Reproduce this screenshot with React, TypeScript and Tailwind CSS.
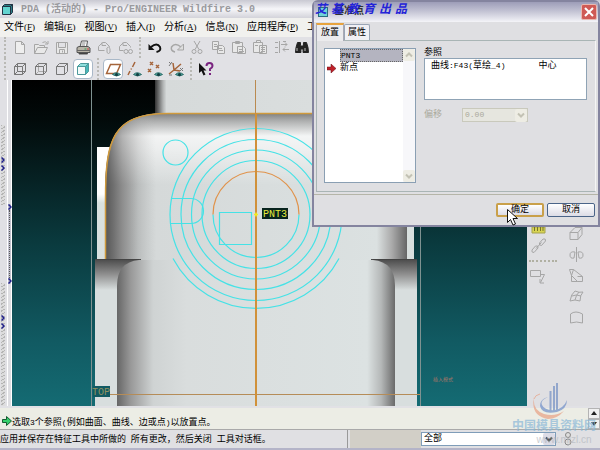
import { Fragment, type ReactNode } from "react";
import clsx from "clsx";

const cjk = "font-['Liberation_Mono','Noto_Sans_CJK_SC',monospace]";

/* Chinese at the parent's size, latin runs one step smaller in a fixed width */
function Mixed({ text, latin = "text-[8px]" }: { text: string; latin?: string }) {
  return (
    <>
      {text.split(/([\x20-\x7e]+)/).map((part, i) => (
        <Fragment key={i}>{i % 2 ? <span className={latin}>{part}</span> : part}</Fragment>
      ))}
    </>
  );
}

const menus = [
  { label: "文件", hot: "F" },
  { label: "编辑", hot: "E" },
  { label: "视图", hot: "V" },
  { label: "插入", hot: "I" },
  { label: "分析", hot: "A" },
  { label: "信息", hot: "N" },
  { label: "应用程序", hot: "P" },
  { label: "工具", hot: "T" },
];

type Tool = { name: string; icon: ReactNode; active?: boolean } | "sep";

const eye = (
  <g>
    <path d="M7.500 13.500q3.500-3.500 8 0q-4 3-8 0z" fill="#4fa39b" stroke="#2d6f6c" />
    <circle cx="11.500" cy="13.500" r="1.500" fill="#123f42" stroke="none" />
  </g>
);

const fileTools: Tool[] = [
  { name: "新建", icon: <path d="M3.500 2.500h6l3 3v9h-9zM9.500 2.500v3h3" fill="#eee" /> },
  {
    name: "打开",
    icon: <path d="M1.500 14.500v-9h4l1 1h5v2M1.500 14.500l3-6h10l-3 6zM9.500 3.500q3-2 5 1M15 2v3h-3" fill="#e8e8e8" />,
  },
  {
    name: "保存",
    icon: <path d="M2.500 3.500h11v11h-11zM4.500 3.500v5h7v-5M5.500 14.500v-4h5v4M8.500 11.500v2" fill="#e8e8e8" />,
  },
  {
    name: "打印",
    icon: (
      <g stroke="#555">
        <path d="M5 8l1.500-6h6l-1 6z" fill="#fff" />
        <path d="M7 4h3.500M6.500 6h3.500" stroke="#888" />
        <path d="M2 8.500l2-1h9l2 1.500v4.500h-13z" fill="#b8b4a8" />
        <path d="M2 11.500h13" stroke="#666" />
        <path d="M4 13.500h8.500v1.500h-8.500z" fill="#333" />
        <path d="M9.500 10h2" stroke="#3a9a50" />
        <path d="M12 10h2" stroke="#d04040" />
      </g>
    ),
  },
  {
    name: "发送",
    icon: <path d="M2.500 11.500v-4l4-4h3l4 4v1M2.500 11.500h6M6 3.500v3h4M10.500 9.500q2-3 3.500 0v4q-1.500 2-3 0v-4" />,
  },
  {
    name: "发送链接",
    icon: (
      <g>
        <path d="M2.500 11.500v-4l4-4h3l4 4v1M2.500 11.500h4M6 3.500v3h4" />
        <circle cx="9" cy="12.500" r="2" />
        <circle cx="13.500" cy="12.500" r="2" />
      </g>
    ),
  },
  "sep",
  {
    name: "撤消",
    icon: (
      <g>
        <path d="M4 8q6-5 9 0q1.500 4-3.500 5" stroke="#111" strokeWidth="2" />
        <path d="M1.500 5v6h6z" fill="#111" stroke="none" />
      </g>
    ),
  },
  {
    name: "重做",
    icon: (
      <g>
        <path d="M13 8q-6-5-9.500 0q-1 4 3.500 5" strokeWidth="1.500" />
        <path d="M15.500 5v6h-6z" fill="#ddd" />
      </g>
    ),
  },
  {
    name: "剪切",
    icon: (
      <g>
        <path d="M5 2l5 8.500M11 2l-5 8.500" />
        <circle cx="5" cy="12.500" r="2" />
        <circle cx="11" cy="12.500" r="2" />
      </g>
    ),
  },
  {
    name: "复制",
    icon: <path d="M2.500 2.500h6v8h-6zM7.500 6.500h5l2 2v6h-7zM9 9.500h3M9 11.500h4M4 5.500h3M4 7.500h3" fill="#e8e8e8" />,
  },
  {
    name: "粘贴",
    icon: <path d="M1.500 3.500h10v10h-10zM4.500 2.500h4v2h-4zM6.500 7.500h6l2 2v5h-8zM8 10.500h4M8 12.500h5" fill="#e8e8e8" />,
  },
  {
    name: "选择性粘贴",
    icon: <path d="M1.500 3.500h9v10h-9zM4.500 1.500h4v2h-4zM7.500 6.500h7v8h-7zM9 8.500h4M9 10.500h4M9 12.500h4M3 6.500h3" fill="#e8e8e8" />,
  },
  {
    name: "再生",
    icon: <path d="M2 3.500h3M2 8.500h3M2 13.500h3M6.500 2v12M8 5.500h6M12 3.500l2 2-2 2M16 10.500h-6M12 8.500l-2 2 2 2M10 2.500h3" />,
  },
  {
    name: "查找",
    icon: (
      <g fill="#222" stroke="#222">
        <path d="M3.500 3.500h3v3l.5 7h-5.500l.5-5z" />
        <path d="M9.500 3.500h3l1.500 5 .5 5h-5.500z" />
        <path d="M6.500 7h3v3h-3z" />
        <path d="M3 9v3M11 9v3" stroke="#bbb" />
      </g>
    ),
  },
];

const cube = "M2.500 5.500h8v8h-8zM2.500 5.500l3-3h8l-3 3M13.500 2.500v8l-3 3";

const viewTools: Tool[] = [
  { name: "线框", icon: <path d={cube + "M5.500 2.500v8h8M5.500 10.500l-3 3"} stroke="#777" /> },
  {
    name: "隐藏线",
    icon: (
      <g>
        <path d="M5.500 2.500v8h8M5.500 10.500l-3 3" stroke="#aaa" />
        <path d={cube} stroke="#777" />
      </g>
    ),
  },
  { name: "无隐藏线", icon: <path d={cube} stroke="#777" /> },
  {
    name: "着色",
    active: true,
    icon: (
      <g stroke="#4c9a9c">
        <path d="M2.500 5.500h8v8h-8z" fill="#f2fbfa" />
        <path d="M2.500 5.500l3-3h8l-3 3z" fill="#8edfdc" />
        <path d="M13.500 2.500v8l-3 3v-8z" fill="#48b8b8" />
      </g>
    ),
  },
  "sep",
  {
    name: "基准平面",
    active: true,
    icon: (
      <g>
        <path d="M1.500 12.500l4-9h10l-4 9z" stroke="#a5643a" strokeWidth="1.500" />
        {eye}
      </g>
    ),
  },
  {
    name: "基准轴",
    icon: (
      <g>
        <path d="M9 1l-2.500 5M5.500 7.500l-.5 1M4 10l-2 4" stroke="#a5643a" strokeWidth="1.500" />
        {eye}
      </g>
    ),
  },
  {
    name: "基准点显示",
    icon: (
      <g>
        <path
          d="M3 1l3 3M6 1l-3 3M9 4l3 3M12 4l-3 3M1 8l3 3M4 8l-3 3"
          stroke="#a5643a"
          strokeWidth="1.500"
        />
        {eye}
      </g>
    ),
  },
  {
    name: "坐标系",
    icon: (
      <g>
        <path d="M6 9l7-6M6 9l-1-7M6 9l-5 4M6 9l6 1" stroke="#a5643a" strokeWidth="1.500" />
        <path d="M1 1l2 2M4 1l-3 4M12 7l3 3M15 7l-3 3M1 14h3" stroke="#777" />
        {eye}
      </g>
    ),
  },
  "sep",
  {
    name: "帮助",
    icon: (
      <g stroke="none">
        <path d="M1 2v10l2.500-2 2 4.500 2-1-2-4h3z" fill="#111" />
        <path d="M8.500 5q0-3 3-3t3 3q0 1.500-2.500 3v2" fill="none" stroke="#7a2480" strokeWidth="2" />
        <path d="M11 12h2v2h-2z" fill="#7a2480" />
      </g>
    ),
  },
];

function Icon({ children }: { children: ReactNode }) {
  return (
    <svg viewBox="0 0 17 17" className="size-[17px]" fill="none" stroke="#a6a6a6" aria-hidden>
      {children}
    </svg>
  );
}

function ToolRow({ tools, className }: { tools: Tool[]; className?: string }) {
  return (
    <div className={clsx("flex items-center gap-px pl-px", className)}>
      <Grip />
      {tools.map((t, i) =>
        t === "sep" ? (
          <Grip key={i} />
        ) : (
          <button
            key={t.name}
            aria-label={t.name}
            className={clsx(
              "flex h-5 w-5 shrink-0 items-center justify-center",
              t.active && "rounded-sm border border-[#a9b8c8] bg-white",
            )}
          >
            <Icon>{t.icon}</Icon>
          </button>
        ),
      )}
    </div>
  );
}

function Grip() {
  return (
    <span className="flex h-full w-2 shrink-0 justify-center">
      <span className="h-full border-l-2 border-dotted border-[#b9b9b5]" />
    </span>
  );
}

function Chevron({ className }: { className?: string }) {
  return (
    <svg viewBox="0 0 8 8" className={clsx("size-2", className)} fill="none" stroke="currentColor" strokeWidth="2" aria-hidden>
      <path d="M1 2.500l3 3 3-3" />
    </svg>
  );
}

function RailArrow() {
  return (
    <svg viewBox="0 0 4 6" className="h-1.5 w-1 text-[#20208a]" fill="none" stroke="currentColor" strokeWidth="1.500" aria-hidden>
      <path d="M.5.5l2.500 2.500-2.500 2.500" />
    </svg>
  );
}

const hatch = "bg-[repeating-linear-gradient(150deg,#b4b4b4_0_1px,#dcdcdc_1px_3px)]";

function LeftRail() {
  return (
    <div className="flex w-3 shrink-0 bg-[#e0e0e4]">
      <div className="flex w-[7px] flex-col pl-px pt-[45px]">
        <div className={clsx("flex h-20 w-1 flex-col items-center gap-0.5 pt-8", hatch)}>
          <RailArrow />
          <RailArrow />
        </div>
        <div className={clsx("mt-[78px] flex w-1 flex-1 flex-col items-center gap-0.5 pt-8", hatch)}>
          <RailArrow />
          <RailArrow />
        </div>
      </div>
      <div className="flex w-[5px] flex-col border-x border-white bg-[#dedee2] pt-[124px]">
        <div className="flex h-20 flex-col items-center justify-between bg-[#c3c3cf]">
          <RailArrow />
          <span className="w-0 flex-1 border-l border-dotted border-[#555]" />
          <RailArrow />
        </div>
      </div>
    </div>
  );
}

function Model() {
  return (
    <svg
      viewBox="12 80 515 326"
      preserveAspectRatio="xMidYMin slice"
      className="absolute inset-0 h-full w-full"
      fill="none"
    >
      <defs>
        <linearGradient id="sky" x1="0" y1="0" x2="0" y2="1">
          <stop offset="0" stopColor="#000" />
          <stop offset=".12" stopColor="#020a0a" />
          <stop offset=".5" stopColor="#0a3a3e" />
          <stop offset=".8" stopColor="#115a62" />
          <stop offset="1" stopColor="#146b73" />
        </linearGradient>
        <linearGradient id="post">
          <stop offset="0" stopColor="#333" />
          <stop offset=".035" stopColor="#b0b3b3" />
          <stop offset=".05" stopColor="#d6dada" />
          <stop offset="1" stopColor="#dce0e0" />
        </linearGradient>
        <linearGradient id="bodyX" gradientUnits="userSpaceOnUse" x1="105" y1="0" x2="407" y2="0">
          <stop offset="0" stopColor="#555" />
          <stop offset=".05" stopColor="#8c8c8c" />
          <stop offset=".11" stopColor="#c0c4c4" />
          <stop offset=".17" stopColor="#d5d9d9" />
          <stop offset=".9" stopColor="#dbe1e1" />
          <stop offset=".95" stopColor="#aaa" />
          <stop offset="1" stopColor="#666" />
        </linearGradient>
        <linearGradient id="bodyY" gradientUnits="userSpaceOnUse" x1="0" y1="113" x2="0" y2="185">
          <stop offset="0" stopColor="#777" stopOpacity=".95" />
          <stop offset=".14" stopColor="#aaa" stopOpacity=".7" />
          <stop offset=".32" stopColor="#fff" stopOpacity=".7" />
          <stop offset=".5" stopColor="#fff" stopOpacity=".55" />
          <stop offset="1" stopColor="#fff" stopOpacity="0" />
        </linearGradient>
        <linearGradient id="edge" gradientUnits="userSpaceOnUse" x1="105" y1="0" x2="155" y2="0">
          <stop offset="0" stopColor="#555" stopOpacity=".9" />
          <stop offset=".35" stopColor="#888" stopOpacity=".5" />
          <stop offset="1" stopColor="#ccc" stopOpacity="0" />
        </linearGradient>
        <linearGradient id="lower" gradientUnits="userSpaceOnUse" x1="117" y1="0" x2="395" y2="0">
          <stop offset="0" stopColor="#666" />
          <stop offset=".05" stopColor="#999" />
          <stop offset=".13" stopColor="#cfd3d3" />
          <stop offset=".25" stopColor="#d9dddd" />
          <stop offset=".9" stopColor="#dce2e2" />
          <stop offset=".95" stopColor="#b5b8b8" />
          <stop offset="1" stopColor="#6a6a6a" />
        </linearGradient>
        <linearGradient id="step" x1="0" y1="0" x2="0" y2="1">
          <stop offset="0" stopColor="#4a4a4a" />
          <stop offset=".5" stopColor="#909090" />
          <stop offset="1" stopColor="#d8dede" />
        </linearGradient>
        <linearGradient id="flank" x1="0" y1="0" x2="0" y2="1">
          <stop offset="0" stopColor="#fff" />
          <stop offset=".42" stopColor="#fff" />
          <stop offset=".5" stopColor="#d9e2e0" />
          <stop offset="1" stopColor="#d9dfde" />
        </linearGradient>
      </defs>

      <path d="M12 80h515v326h-515z" fill="url(#sky)" />
      <path d="M155 80h230v40h-230z" fill="url(#post)" />
      <path d="M97 147h317v112h-317z" fill="url(#flank)" />
      <path d="M95 259h322v147h-322z" fill="#d8dede" />

      {/* upper shell */}
      <path d="M105 262V200C105 140 112 113 168 113H345C400 113 407 140 407 200V262z" fill="url(#bodyX)" />
      <path d="M105 262V200C105 140 112 113 168 113H345C400 113 407 140 407 200V262z" fill="url(#bodyY)" />
      <path d="M105 262V200C105 140 112 113 168 113H190V262z" fill="url(#edge)" />

      {/* lower shell with the two shoulder steps */}
      <path d="M95 259h46v31h-46zM371 259h46v31h-46z" fill="url(#step)" />
      <path d="M139 260Q117 262 117 286V406H395V286Q395 262 373 260z" fill="url(#lower)" />
      <path d="M95 259.500h44M373 259.500h44" stroke="#444" />

      <path d="M105.500 259V200C105.500 140 112 113.500 168 113.500H345" stroke="#d09a3c" strokeWidth="1.500" />
      <path d="M91.500 80V406M420.500 80V406" stroke="#7f9291" />

      {/* sketch curves */}
      <g stroke="#45e2e6" strokeWidth="1.200">
        <circle cx="256" cy="214.500" r="86" />
        <circle cx="256" cy="214.500" r="75" />
        <circle cx="256" cy="214.500" r="64.500" />
        <circle cx="256" cy="214.500" r="54" />
        <path d="M213 214.500a43 43 0 0 0 86 0" />
        <path d="M173 258.500a94 94 0 0 0 166 0" />
        <circle cx="175.500" cy="152.500" r="12.500" />
        <path d="M171 198.500h20a12.500 12.500 0 0 1 0 25h-20" />
        <path d="M219.500 212.500h32v32h-32z" />
      </g>
      <path d="M213 214.500a43 43 0 0 1 86 0" stroke="#e0924a" strokeWidth="1.200" />

      <path d="M110 394.500h310" stroke="#b58c58" />
      <path d="M255.500 80v34" stroke="#b98a50" />
      <path d="M256 113V406" stroke="#d0913a" strokeWidth="2" />
      <path d="M254 214.500h4M256 212.500v4" stroke="#f2ee20" strokeWidth="1.500" />

      <path d="M262 208h26v11h-26z" fill="#08241e" />
      <text x="263" y="217" fontSize="10" fill="#e6ea3c" className="font-['Liberation_Mono',monospace]">
        PNT3
      </text>
      <path d="M93 386h17v11h-17z" fill="#125a62" />
      <text x="92" y="395" fontSize="10" fill="#8f9160" className="font-['Liberation_Mono',monospace]">
        TOP
      </text>
      <text x="433" y="381" fontSize="5" fill="#a07468" className="font-['Noto_Sans_CJK_SC',sans-serif]">
        插入模式
      </text>
    </svg>
  );
}

const featureIcons = [
  { name: "拉伸", d: "M2 7.500h8v7h-8zM2 7.500l5-5h7l-4 5M14 2.500v7l-4 5" },
  { name: "镜像", d: "M8.500 1v15M7 6q-5-1-5 3t4 3zM10 6q5-1 5 3t-4 3z" },
  { name: "移动", d: "M1.500 2.500h4l9 7v5h-5l-6-6zM5.500 2.500l-2 6M3.500 14.500v-6l6 6zM9.500 9.500h5" },
  { name: "边界混合", d: "M2 13q1-7 5-10q4 2 8 1q-3 3-3 9q-5-2-10 0zM11 4q-3 3-4 8M4 8q4-2 9 0" },
  { name: "填充", d: "M2.500 14v-9q5-4 12 0v9q-6-2-12 0z" },
];

function RightRail() {
  return (
    <div className="flex w-[73px] shrink-0 gap-[11px] bg-[#dfdfe2] pl-0.5 pt-[145px]">
      <div className="flex w-7 flex-col items-start">
        <button aria-label="测量" className="px-px">
          <svg viewBox="0 0 17 12" className="h-3 w-[17px]" aria-hidden>
            <path d="M2 2h13v6h-13z" fill="#d8d452" stroke="#a5a24c" />
            <path d="M4.500 2v4M7.500 2v4M10.500 2v4M13 2v4" stroke="#77742a" />
          </svg>
        </button>
        <button aria-label="链接" className="px-px">
          <Icon>
            <path d="M9.500 6l3.500-4q3-1 2.500 2l-4 4.500q-3 0-2-2.500zM2 13l3.500-4q3-1 2.500 2l-4 4.500q-3 0-2-2.500zM6 11.500l5.500-6" />
          </Icon>
        </button>
        <span className="my-1.5 w-full border-t-2 border-dotted border-[#b0b0a2]" />
        <button aria-label="参照">
          <Icon>
            <path d="M1.500 2.500h10v6h-10zM11.500 6.500h4l-4 8M11 11v4h4" />
          </Icon>
        </button>
      </div>
      <div className="flex flex-col gap-1">
        {featureIcons.map((f) => (
          <button key={f.name} aria-label={f.name}>
            <Icon>
              <path d={f.d} />
            </Icon>
          </button>
        ))}
      </div>
    </div>
  );
}

const scrollBtn = "flex items-center justify-center rounded-xs bg-[#eeede4] text-[#c3c2b4]";

function PointDialog() {
  return (
    <section
      aria-label="基准点"
      className="absolute right-0 top-0 flex w-72 flex-col rounded-t-md border-2 border-[#84849f] bg-[#dfdfe2]"
    >
      <header className="relative flex h-5 items-center gap-1.5 bg-linear-to-b from-[#9d9db8] via-[#c6c6d6] to-[#f4f4f8] pl-1">
        <span className="size-2.5 border border-[#2c6c80] bg-[#6fd3d8]" />
        <h2 className="text-[10px] font-bold leading-none text-[#333]">基准点</h2>
        <button
          aria-label="关闭"
          className="ml-auto mr-px flex size-4 items-center justify-center rounded-xs border border-[#e9b8b0] bg-[#cf5a55] text-white"
        >
          <svg viewBox="0 0 10 10" className="size-2.5" stroke="currentColor" strokeWidth="2" aria-hidden>
            <path d="M1 1l8 8M9 1l-8 8" />
          </svg>
        </button>
        <div className="absolute left-px top-0 flex gap-1 text-xs font-bold italic leading-4 text-[#2424d8]">
          {[..."艾基教育出品"].map((c) => (
            <span key={c}>{c}</span>
          ))}
        </div>
      </header>

      <div className="flex h-[18px] items-end px-0.5 leading-[10px]" role="tablist">
        <button
          role="tab"
          aria-selected
          className="relative -mb-px flex h-[18px] w-7 items-center justify-center border-x border-t-2 border-x-[#a9a9b4] border-t-[#e8a33d] bg-[#ebebed]"
        >
          放置
        </button>
        <button
          role="tab"
          aria-selected={false}
          className="flex h-4 w-[26px] items-center justify-center rounded-t-xs border border-b-0 border-[#9aa5b5] bg-[#f0f0f4]"
        >
          属性
        </button>
      </div>

      <div className="mx-0.5 flex gap-2 border border-[#a9b5b5] border-r-[#f5f5f5] pb-2 pl-[7px] pr-2 pt-[7px]" role="tabpanel">
        <div className="flex h-[135px] w-[92px] shrink-0 border border-[#8a9fb3] bg-white">
          <ul className="flex-1" role="listbox" aria-label="点">
            <li role="option" aria-selected className="flex h-[13px] pl-[15px] leading-[11px]">
              <span className="flex-1 border border-dotted border-[#666] bg-[#b4b4c0]">
                <Mixed text="PNT3" />
              </span>
            </li>
            <li role="option" aria-selected={false} className="flex h-[13px] items-center gap-1 pl-0.5">
              <svg viewBox="0 0 9 9" className="size-[9px]" aria-hidden>
                <path d="M0 3h4V0l5 4.500L4 9V6H0z" fill="#c02028" stroke="#601018" strokeWidth=".5" />
              </svg>
              新点
            </li>
          </ul>
          <div className="flex w-3 flex-col justify-between bg-[#f7f7fa]">
            <button aria-label="向上" className={clsx(scrollBtn, "h-3")}>
              <Chevron className="rotate-180" />
            </button>
            <button aria-label="向下" className={clsx(scrollBtn, "h-3")}>
              <Chevron />
            </button>
          </div>
        </div>
        <div className="flex flex-1 flex-col">
          <h3 className="leading-[10px]">参照</h3>
          <div className="flex h-[42px] gap-[33px] whitespace-pre border border-[#8fa3b5] bg-white pl-1.5 pt-px leading-3">
            <span>
              <Mixed text="曲线:F43(草绘_4)" />
            </span>
            <span>中心</span>
          </div>
          <div className="mt-2 flex items-center gap-5 text-[#aaa99c]">
            <label htmlFor="offset">偏移</label>
            <div className="relative">
              <select
                id="offset"
                disabled
                className="h-3.5 w-[66px] appearance-none border border-[#c9c9bc] bg-[#e6e6df] pl-0.5 text-[8px] leading-3 opacity-100"
              >
                <option>0.00</option>
              </select>
              <span className={clsx(scrollBtn, "pointer-events-none absolute inset-y-px right-px w-3")}>
                <Chevron />
              </span>
            </div>
          </div>
        </div>
      </div>

      <footer className="mt-0.5 flex justify-end gap-[3px] border-t border-[#b5b5a8] px-[3px] pb-2 pt-2">
        <button className="h-3.5 w-12 rounded-xs border-2 border-[#c9a04a] bg-linear-to-b from-white to-[#dcdce6] leading-[10px]">
          确定
        </button>
        <button className="h-3.5 w-12 rounded-xs border border-[#4a6488] bg-linear-to-b from-white to-[#dcdce6] leading-[10px]">
          取消
        </button>
      </footer>

      <svg viewBox="0 0 11 17" className="absolute left-[193px] top-[207px] h-[17px] w-[11px]" aria-hidden>
        <path d="M.5.500v13l3-3 2.500 5.500 2.500-1-2.500-5.500h4.500z" fill="#fff" stroke="#111" />
      </svg>
    </section>
  );
}

function Watermark() {
  return (
    <div className="pointer-events-none absolute bottom-1 right-1 flex flex-col items-center opacity-70">
      <svg viewBox="0 0 36 38" className="mr-2 h-[38px] w-9" fill="none" aria-hidden>
        <path d="M18.500 9v20M22 4v26M25 1v28" stroke="#7390c4" strokeWidth="2" />
        <path d="M16 15q-8 3-6 8q3 6 13 5q9-2 12-10q0 9-10 12q-15 3-17-6q0-7 8-9z" fill="#6f8fc8" />
        <path d="M2 14q-2 14 10 18q11 3 20-3q-7 8-16 8Q-2 34 2 14z" fill="#e8a184" />
        <path d="M2 17q1-4 6-5" stroke="#e8a184" />
      </svg>
      <p className="text-xs font-bold leading-[14px] text-[#8ab8d8]">中国模具资料网</p>
      <p className="-mr-5 font-['Liberation_Sans',sans-serif] text-[10px] leading-3 text-[#b4b8c0]">www.mjzl.cn</p>
    </div>
  );
}

export default function App() {
  return (
    <div className={clsx("relative flex h-screen flex-col overflow-hidden bg-[#e1e1e5] text-[9px] text-black", cjk)}>
      <header className="flex h-[18px] shrink-0 items-center gap-2 bg-linear-to-b from-[#c9c9d2] via-[#f6f6f9] to-[#d3d3da] pl-0.5">
        <svg viewBox="0 0 11 11" className="size-[11px]" stroke="#234" aria-hidden>
          <path d="M.5 2.500h8v8h-8z" fill="#62d4d0" />
          <path d="M.5 2.500l2-2h8l-2 2zM8.500 2.500l2-2v8l-2 2z" fill="#2b7f86" />
        </svg>
        <h1 className="whitespace-pre pt-0.5 text-[10px] font-bold leading-none text-[#9a9a9e]">
          PDA (活动的) - Pro/ENGINEER Wildfire 3.0
        </h1>
      </header>

      <nav className="flex h-[19px] shrink-0 items-center gap-[9px] overflow-hidden bg-[#f1f1ee] pl-1 text-[10px]">
        {menus.map((m) => (
          <button key={m.hot} className="shrink-0 whitespace-nowrap leading-3">
            {m.label}
            <span className="font-['Liberation_Serif',serif] text-[9px]">
              (<u>{m.hot}</u>)
            </span>
          </button>
        ))}
      </nav>

      <ToolRow tools={fileTools} className="h-[21px] shrink-0" />
      <ToolRow tools={viewTools} className="h-[22px] shrink-0" />

      <main className="flex min-h-0 flex-1">
        <LeftRail />
        <div className="relative flex-1 overflow-hidden">
          <Model />
        </div>
        <RightRail />
      </main>

      <div className="mt-0.5 flex h-[22px] shrink-0 items-center border-b border-[#a9a9a9] bg-[#ecede5]">
        <svg viewBox="0 0 10 10" className="ml-0.5 mt-1 size-[10px]" aria-hidden>
          <path d="M.5 3.500h4v-3l5 4.500-5 4.500v-3h-4z" fill="#35d06c" stroke="#145c30" />
        </svg>
        <p className="mt-2 whitespace-pre leading-3">
          <Mixed text="选取3个参照(例如曲面、曲线、边或点)以放置点。" />
        </p>
        <div className="ml-auto flex h-full w-3 flex-col">
          <button aria-label="上一条" className="flex flex-1 items-center justify-center border border-[#b4b4b4] bg-[#f0f0f0]">
            <span className="border-x-3 border-b-4 border-x-transparent border-b-[#222]" />
          </button>
          <button aria-label="下一条" className="flex flex-1 items-center justify-center border border-[#b4b4b4] bg-[#f0f0f0]">
            <span className="border-x-3 border-t-4 border-x-transparent border-t-[#222]" />
          </button>
        </div>
      </div>

      <footer className="flex h-5 shrink-0 items-stretch border-b-2 border-[#b4b4c8] bg-[#e0e0e3]">
        <p className="flex flex-1 items-center whitespace-pre border-r border-[#999] pt-0.5 leading-3">
          <Mixed text="应用并保存在特征工具中所做的 所有更改，然后关闭 工具对话框。" />
        </p>
        <span className="ml-0.5 w-[71px] bg-[#d2cfc7]" />
        <div className="relative my-0.5 w-[135px]">
          <select
            aria-label="选择过滤器"
            className="h-full w-full appearance-none border border-[#7f9db9] bg-white pl-0.5 leading-3"
          >
            <option>全部</option>
          </select>
          <span className="pointer-events-none absolute inset-y-px right-px flex w-3 items-center justify-center rounded-xs bg-[#dcdce6] text-[#333]">
            <Chevron />
          </span>
        </div>
        <span className="flex w-11 items-center pl-[7px]">
          <svg viewBox="0 0 10 14" className="h-3.5 w-2.5" fill="#ddd" stroke="#888" aria-hidden>
            <circle cx="5" cy="3" r="2.500" />
            <circle cx="5" cy="10" r="3" />
          </svg>
        </span>
      </footer>

      <PointDialog />
      <Watermark />
    </div>
  );
}
